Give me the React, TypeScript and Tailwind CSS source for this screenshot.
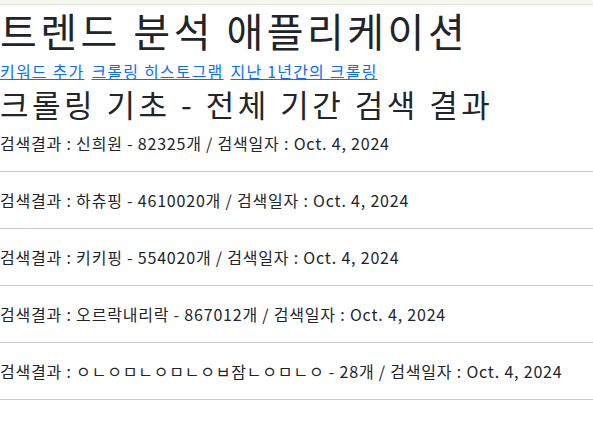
const results = [
  { keyword: "신희원", count: 82325, date: "Oct. 4, 2024" },
  { keyword: "하츄핑", count: 4610020, date: "Oct. 4, 2024" },
  { keyword: "키키핑", count: 554020, date: "Oct. 4, 2024" },
  { keyword: "오르락내리락", count: 867012, date: "Oct. 4, 2024" },
  { keyword: "ㅇㄴㅇㅁㄴㅇㅁㄴㅇㅂ잠ㄴㅇㅁㄴㅇ", count: 28, date: "Oct. 4, 2024" },
];

const links = ["키워드 추가", "크롤링 히스토그램", "지난 1년간의 크롤링"];

export default function App() {
  return (
    <div
      className="min-h-[425px] bg-white text-[#212529]"
      style={{ fontFamily: '"Noto Sans CJK KR", "Noto Sans", sans-serif' }}
    >
      <div className="h-[5px] border-b border-[#e2e3da] bg-[#f6f7ef]" />

      <h1 className="text-[40px] leading-[50px] tracking-[3.5px]">트렌드 분석 애플리케이션</h1>

      <nav className="mt-[5px] flex gap-[7px] text-[16px] leading-[22px] tracking-[1.2px]">
        {links.map((l) => (
          <a key={l} href="#" className="text-[#0d6efd] underline">
            {l}
          </a>
        ))}
      </nav>

      <h2 className="text-[31px] leading-[44px] tracking-[3.5px]">크롤링 기초 - 전체 기간 검색 결과</h2>

      <div className="mt-[7px]">
        {results.map((r) => (
          <div key={r.keyword}>
            <p className="text-[16px] leading-[20px] tracking-[0.8px]">
              검색결과 : {r.keyword} - {r.count}개 / 검색일자 : {r.date}
            </p>
            <hr className="my-[18px] border-[#cacbcc]" />
          </div>
        ))}
      </div>
    </div>
  );
}
